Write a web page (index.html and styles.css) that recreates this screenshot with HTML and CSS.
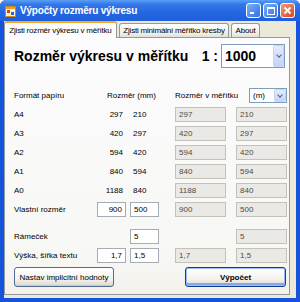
FILE: index.html
```html
<!DOCTYPE html>
<html lang="cs">
<head>
    <meta charset="UTF-8">
    <title>Výpočty rozměru výkresu</title>
    <link rel="stylesheet" href="styles.css">
</head>
<body>
    <div class="window">
        <!-- titulek okna -->
        <div class="titlebar">
            <svg class="app-icon" width="11" height="11" viewBox="0 0 11 11">
                <rect x="0.5" y="0.5" width="10" height="10" fill="#fff6c8" stroke="#c98a1c"/>
                <rect x="1" y="1" width="9" height="2" fill="#f0a020"/>
                <rect x="2" y="4" width="3" height="3" fill="#e03a2a"/>
                <rect x="6" y="6" width="3" height="3" fill="#2a62d8"/>
            </svg>
            <span class="title">Výpočty rozměru výkresu</span>
            <div class="caption-buttons">
                <span class="cap-btn min"></span>
                <span class="cap-btn max"></span>
                <span class="cap-btn close">
                    <svg width="9" height="9" viewBox="0 0 9 9">
                        <path d="M1.5 1.5 L7.5 7.5 M7.5 1.5 L1.5 7.5" stroke="#fff" stroke-width="1.8"/>
                    </svg>
                </span>
            </div>
        </div>

        <div class="client">
            <div class="tabs">
                <div class="tab active">Zjisti rozměr výkresu v měřítku</div>
                <div class="tab second">Zjisti minimální měřítko kresby</div>
                <div class="tab about">About</div>
            </div>

            <div class="tab-page">
                <div class="heading">
                    <h1>Rozměr výkresu v měřítku</h1>
                    <span class="ratio">1 :</span>
                    <div class="combo big">
                        <span>1000</span>
                        <span class="drop"><i></i></span>
                    </div>
                </div>

                <div class="row head">
                    <span>Formát papíru</span>
                    <span class="span2 mm">Rozměr (mm)</span>
                    <span class="nowrap">Rozměr v měřítku</span>
                    <div class="combo small">
                        <span>(m)</span>
                        <span class="drop"><i></i></span>
                    </div>
                </div>

                <div class="row">
                    <span>A4</span>
                    <span class="num">297</span>
                    <span class="num left">210</span>
                    <span class="box">297</span>
                    <span class="box">210</span>
                </div>
                <div class="row">
                    <span>A3</span>
                    <span class="num">420</span>
                    <span class="num left">297</span>
                    <span class="box">420</span>
                    <span class="box">297</span>
                </div>
                <div class="row">
                    <span>A2</span>
                    <span class="num">594</span>
                    <span class="num left">420</span>
                    <span class="box">594</span>
                    <span class="box">420</span>
                </div>
                <div class="row">
                    <span>A1</span>
                    <span class="num">840</span>
                    <span class="num left">594</span>
                    <span class="box">840</span>
                    <span class="box">594</span>
                </div>
                <div class="row">
                    <span>A0</span>
                    <span class="num">1188</span>
                    <span class="num left">840</span>
                    <span class="box">1188</span>
                    <span class="box">840</span>
                </div>
                <div class="row">
                    <span>Vlastní rozměr</span>
                    <span class="input">900</span>
                    <span class="input left">500</span>
                    <span class="box">900</span>
                    <span class="box">500</span>
                </div>
                <div class="row frame">
                    <span>Rámeček</span>
                    <span></span>
                    <span class="input left">5</span>
                    <span></span>
                    <span class="box">5</span>
                </div>
                <div class="row">
                    <span>Výška, šířka textu</span>
                    <span class="input">1,7</span>
                    <span class="input left">1,5</span>
                    <span class="box">1,7</span>
                    <span class="box">1,5</span>
                </div>

                <div class="buttons">
                    <button class="btn">Nastav implicitní hodnoty</button>
                    <button class="btn default">Výpočet</button>
                </div>
            </div>
        </div>
    </div>
</body>
</html>
```

FILE: styles.css
```css
body {
    margin: 0;
    font-family: "Liberation Sans", Arial, sans-serif;
    font-size: 9px;
    color: #000;
}

.window {
    width: 300px;
    height: 302px;
    box-sizing: border-box;
    display: flex;
    flex-direction: column;
    background: #1553dc;
    padding: 0 4px 4px 4px;
    border-radius: 6px 6px 0 0;
}

/* titulek */
.titlebar {
    height: 21px;
    margin: 0 -4px;
    padding: 0 5px;
    display: flex;
    align-items: center;
    background: linear-gradient(#5aa0f7 0%, #3478e8 20%, #2466e2 60%, #1f5edc 100%);
    border-radius: 6px 6px 0 0;
}

.app-icon {
    margin-right: 4px;
    margin-top: 1px;
}

.title {
    color: #fff;
    font-size: 10px;
    font-weight: bold;
    letter-spacing: -0.2px;
}

.caption-buttons {
    margin-left: auto;
    display: flex;
    gap: 2px;
}

.cap-btn {
    width: 13px;
    height: 13px;
    border: 1px solid #fff;
    border-radius: 3px;
    background: linear-gradient(135deg, #7ab0fa, #3470e4);
    position: relative;
    display: flex;
    align-items: center;
    justify-content: center;
}

.cap-btn.min::after {
    content: "";
    position: absolute;
    left: 3px;
    bottom: 3px;
    width: 4px;
    height: 2px;
    background: #fff;
}

.cap-btn.max::after {
    content: "";
    width: 6px;
    height: 5px;
    border: 1px solid #fff;
    border-top-width: 2px;
}

.cap-btn.close {
    background: linear-gradient(135deg, #f29a7a, #e0451c);
}

/* klientska oblast */
.client {
    flex: 1;
    background: #ece9d8;
    display: flex;
    flex-direction: column;
    padding: 0 6px 3px 0;
}

.tabs {
    display: flex;
    align-items: flex-end;
    height: 16px;
    gap: 2px;
}

.tab {
    height: 14px;
    box-sizing: border-box;
    padding: 0;
    font-size: 8px;
    letter-spacing: -0.2px;
    line-height: 13px;
    text-align: center;
    border: 1px solid #919b9c;
    border-bottom: none;
    border-radius: 3px 3px 0 0;
    background: linear-gradient(#ffffff, #f0efe9 70%, #e3e0d4);
    white-space: nowrap;
    overflow: hidden;
}

.tab.active {
    width: 113px;
    height: 17px;
    padding-top: 1px;
    background: #fcfcfe;
    border-top: 2px solid #f5a623;
    position: relative;
    z-index: 1;
    margin-bottom: -1px;
}

.tab.second {
    width: 110px;
}

.tab.about {
    width: 29px;
}

.tab-page {
    flex: 1;
    border: 1px solid #919b9c;
    background: linear-gradient(#fcfcfe, #f7f7f4 85%, #f2f1ec);
    padding: 6px 2px 0 9px;
}

/* nadpis */
.heading {
    display: flex;
    align-items: center;
    height: 24px;
    margin-bottom: 20px;
}

h1 {
    margin: 0;
    font-size: 14px;
    font-weight: bold;
}

.ratio {
    margin-left: auto;
    font-size: 14px;
    font-weight: bold;
    margin-right: 3px;
}

.combo {
    display: flex;
    align-items: center;
    box-sizing: border-box;
    border: 1px solid #7f9db9;
    background: #fff;
}

.combo span:first-child {
    flex: 1;
    padding-left: 3px;
}

.combo.big {
    width: 64px;
    height: 24px;
    margin-right: 2px;
    font-size: 14px;
    font-weight: bold;
}

.combo.small {
    width: 38px;
    height: 15px;
    justify-self: end;
    font-size: 8px;
}

.drop {
    width: 11px;
    height: 100%;
    box-sizing: border-box;
    border: 1px solid #c6d4f4;
    border-radius: 2px;
    background: linear-gradient(#e3ebfd, #c4d4f8);
    display: flex;
    align-items: center;
    justify-content: center;
}

.drop i {
    width: 3px;
    height: 3px;
    border-right: 1px solid #4d6185;
    border-bottom: 1px solid #4d6185;
    transform: rotate(45deg);
    margin-top: -2px;
}

.combo.small .drop {
    width: 12px;
}

/* tabulka */
.row {
    display: grid;
    grid-template-columns: 83px 33px 45px 61px 51px;
    align-items: center;
    height: 15px;
    margin-top: 4px;
    font-size: 8px;
}

.row.head {
    margin-top: 0;
    margin-bottom: 1px;
}

.row.frame {
    margin-top: 12px;
}

.span2 {
    grid-column: span 2;
}

.mm {
    padding-left: 10px;
}

.nowrap {
    white-space: nowrap;
}

.num,
.input {
    width: 29px;
    box-sizing: border-box;
    text-align: right;
    padding-right: 3px;
}

.num.left,
.input.left {
    text-align: left;
    padding: 0 0 0 3px;
}

.input {
    height: 15px;
    line-height: 13px;
    border: 1px solid #a5acb5;
    background: #fff;
}

.box {
    width: 51px;
    height: 15px;
    box-sizing: border-box;
    line-height: 13px;
    padding-left: 3px;
    border: 1px solid #c4c2b8;
    background: #ebe9e5;
    color: #4a4a4a;
}

/* tlacitka */
.buttons {
    display: flex;
    justify-content: space-between;
    margin-top: 4px;
    padding-right: 1px;
}

.btn {
    height: 20px;
    box-sizing: border-box;
    font-family: "Liberation Sans", Arial, sans-serif;
    font-size: 8px;
    padding: 0;
    border: 1px solid #4f6d99;
    border-radius: 3px;
    background: linear-gradient(#ffffff, #f4f3ee 60%, #dcd8cc);
    box-shadow: inset 0 -1px 0 #cfcabc;
}

.btn:first-child {
    width: 100px;
}

.btn.default {
    width: 101px;
    font-weight: bold;
    border-color: #0f3f94;
    box-shadow: inset 0 0 0 1px #9cbdf2, inset 0 -2px 0 1px #86a8e8;
}
```
